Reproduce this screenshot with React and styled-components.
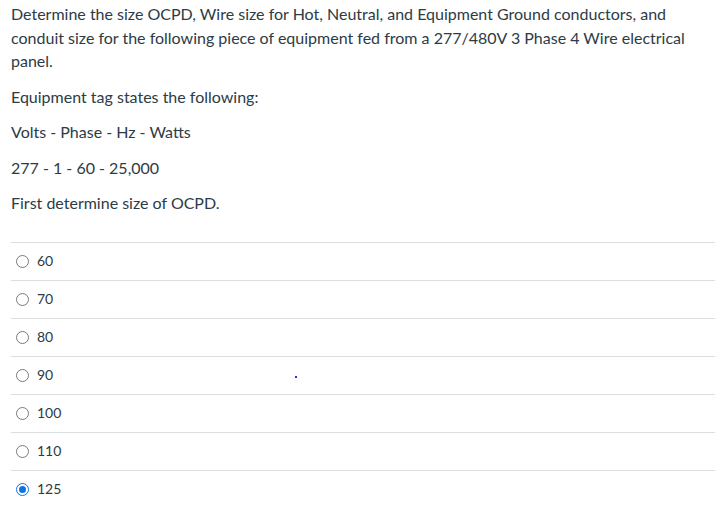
import React from "react";
import styled, { createGlobalStyle } from "styled-components";

const GlobalStyle = createGlobalStyle`
    body {
        margin: 0;
        background: #fff;
        font-family: Lato, "Liberation Sans", sans-serif;
        color: #2d3b45;
    }
`;

const Page = styled.div`
    position: relative;
    padding: 2px 7px 0 11px;
`;

const Text = styled.p`
    margin: 0 0 12px;
    font-size: 16px;
    line-height: 23.5px;
`;

const Answers = styled.div`
    margin-top: 27px;
`;

const Answer = styled.label`
    box-sizing: border-box;
    display: flex;
    align-items: center;
    gap: 8px;
    height: 38px;
    border-top: 1px solid #dcdfe2;
    padding: 0 0 2px 5px;
    font-size: 14px;
    cursor: pointer;
`;

const Radio = styled.span`
    box-sizing: border-box;
    width: 13px;
    height: 13px;
    margin-top: 2px;
    border-radius: 50%;
    border: 1px solid ${(p) => (p.checked ? "#0b74e5" : "#7a7a7a")};
    display: flex;
    align-items: center;
    justify-content: center;

    &::after {
        content: "";
        width: 7px;
        height: 7px;
        border-radius: 50%;
        background: ${(p) => (p.checked ? "#0b74e5" : "transparent")};
    }
`;

const Dot = styled.span`
    position: absolute;
    left: 295px;
    top: 376px;
    width: 2px;
    height: 2px;
    background: #1d2bf0;
`;

const options = ["60", "70", "80", "90", "100", "110", "125"];

export default function App() {
    return (
        <Page>
            <GlobalStyle />
            <Text>
                Determine the size OCPD, Wire size for Hot, Neutral, and Equipment Ground conductors, and
                conduit size for the following piece of equipment fed from a 277/480V 3 Phase 4 Wire electrical
                panel.
            </Text>
            <Text>Equipment tag states the following:</Text>
            <Text>Volts - Phase - Hz - Watts</Text>
            <Text>277 - 1 - 60 - 25,000</Text>
            <Text>First determine size of OCPD.</Text>
            <Answers>
                {options.map((o) => (
                    <Answer key={o}>
                        <Radio checked={o === "125"} />
                        {o}
                    </Answer>
                ))}
            </Answers>
            <Dot />
        </Page>
    );
}
